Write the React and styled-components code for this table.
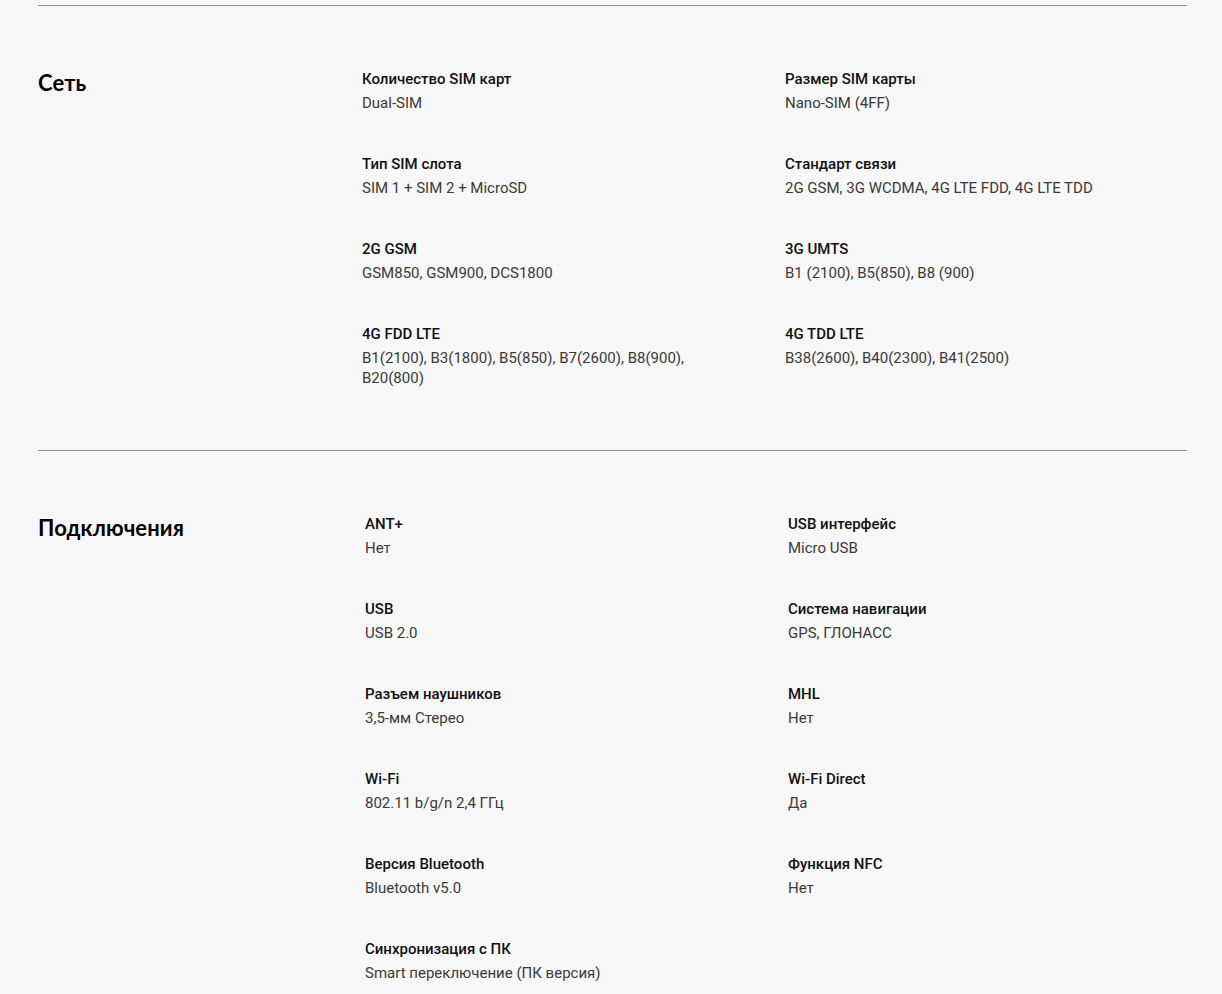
import React from "react";
import styled, { createGlobalStyle } from "styled-components";

const GlobalStyle = createGlobalStyle`
  body {
    margin: 0;
    background: #f7f7f7;
    font-family: Roboto, "Liberation Sans", sans-serif;
  }
`;

const Page = styled.div`
  padding: 5px 35px 0 38px;
`;

const Section = styled.section`
  display: grid;
  grid-template-columns: ${({ $offset }) => 324 + $offset}px 1fr;
  border-top: 1px solid #8f8f8f;
  padding: 61px 0 62px;
`;

const Heading = styled.h2`
  margin: 0;
  padding-top: 2px;
  font-family: Lato, "Liberation Sans", sans-serif;
  font-size: 22px;
  font-weight: 700;
  color: #000;
  letter-spacing: 0.1px;
`;

const Specs = styled.div`
  display: grid;
  grid-template-columns: 423px 1fr;
  row-gap: 39px;
`;

const Item = styled.div`
  display: flex;
  flex-direction: column;
  gap: 2px;
`;

const Label = styled.span`
  font-size: 15px;
  line-height: 24px;
  font-weight: 500;
  color: #111;
`;

const Value = styled.span`
  font-size: 15px;
  line-height: 20px;
  font-weight: 400;
  color: #3a3a3a;
  max-width: 340px;
`;

const sections = [
  {
    title: "Сеть",
    offset: 0,
    items: [
      ["Количество SIM карт", "Dual-SIM"],
      ["Размер SIM карты", "Nano-SIM (4FF)"],
      ["Тип SIM слота", "SIM 1 + SIM 2 + MicroSD"],
      ["Стандарт связи", "2G GSM, 3G WCDMA, 4G LTE FDD, 4G LTE TDD"],
      ["2G GSM", "GSM850, GSM900, DCS1800"],
      ["3G UMTS", "B1 (2100), B5(850), B8 (900)"],
      ["4G FDD LTE", "B1(2100), B3(1800), B5(850), B7(2600), B8(900), B20(800)"],
      ["4G TDD LTE", "B38(2600), B40(2300), B41(2500)"],
    ],
  },
  {
    title: "Подключения",
    offset: 3,
    items: [
      ["ANT+", "Нет"],
      ["USB интерфейс", "Micro USB"],
      ["USB", "USB 2.0"],
      ["Система навигации", "GPS, ГЛОНАСС"],
      ["Разъем наушников", "3,5-мм Стерео"],
      ["MHL", "Нет"],
      ["Wi-Fi", "802.11 b/g/n 2,4 ГГц"],
      ["Wi-Fi Direct", "Да"],
      ["Версия Bluetooth", "Bluetooth v5.0"],
      ["Функция NFC", "Нет"],
      ["Синхронизация с ПК", "Smart переключение (ПК версия)"],
    ],
  },
];

const App = () => {
  return (
    <Page>
      <GlobalStyle />
      {sections.map((s) => (
        <Section key={s.title} $offset={s.offset}>
          <Heading>{s.title}</Heading>
          <Specs>
            {s.items.map(([label, value]) => (
              <Item key={label}>
                <Label>{label}</Label>
                <Value>{value}</Value>
              </Item>
            ))}
          </Specs>
        </Section>
      ))}
    </Page>
  );
};

export default App;
